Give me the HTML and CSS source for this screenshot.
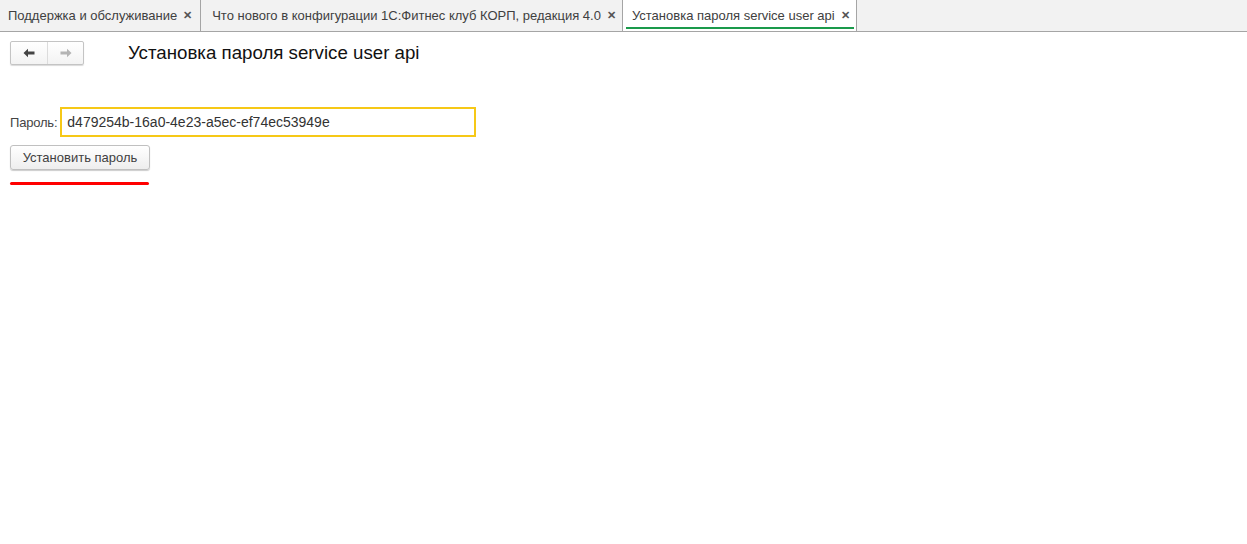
FILE: index.html
```html
<!DOCTYPE html>
<html lang="ru">
<head>
<meta charset="utf-8">
<title>Установка пароля service user api</title>
<link rel="stylesheet" href="styles.css">
</head>
<body>
<div class="tabbar">
  <div class="tab tab-first"><span class="tab-text">Поддержка и обслуживание</span><span class="tab-close">✕</span></div>
  <div class="tab tab-second"><span class="tab-text">Что нового в конфигурации 1С:Фитнес клуб КОРП, редакция 4.0</span><span class="tab-close">✕</span></div>
  <div class="tab tab-active"><span class="tab-text">Установка пароля service user api</span><span class="tab-close">✕</span></div>
</div>
<div class="content">
  <div class="header">
    <div class="nav">
      <div class="nav-btn nav-back"><svg width="12" height="10" viewBox="0 0 12 10"><path d="M0.5 5 L5 0.8 L5 3.6 L11.5 3.6 L11.5 6.4 L5 6.4 L5 9.2 Z" fill="#444"/></svg></div>
      <div class="nav-btn nav-fwd"><svg width="12" height="10" viewBox="0 0 12 10"><path d="M11.5 5 L7 0.8 L7 3.6 L0.5 3.6 L0.5 6.4 L7 6.4 L7 9.2 Z" fill="#b4b4b4"/></svg></div>
    </div>
    <h1 class="title">Установка пароля service user api</h1>
  </div>
  <div class="field">
    <span class="label">Пароль:</span>
    <div class="input">d479254b-16a0-4e23-a5ec-ef74ec53949e</div>
  </div>
  <div class="btn">Установить пароль</div>
  <div class="redline"></div>
</div>
</body>
</html>
```
FILE: styles.css
```css
html, body {
  margin: 0;
  padding: 0;
  background: #ffffff;
  font-family: "Liberation Sans", Arial, sans-serif;
  color: #333333;
}
.tabbar {
  display: flex;
  height: 31px;
  background: #f2f2f2;
  border-bottom: 1px solid #a5a5a5;
}
.tab {
  display: flex;
  align-items: center;
  padding: 0 8px 0 11px;
  border-right: 1px solid #a5a5a5;
  font-size: 13px;
  color: #404040;
  position: relative;
}
.tab-first {
  padding-left: 8px;
}
.tab-second {
  padding-right: 6px;
}
.tab-text {
  white-space: nowrap;
}
.tab-close {
  margin-left: 6px;
  font-size: 11px;
  font-weight: bold;
  color: #555555;
}
.tab-active {
  background: #ffffff;
  padding-left: 9px;
  padding-right: 6px;
}
.tab-active::after {
  content: "";
  position: absolute;
  left: 3px;
  right: 2px;
  top: 27px;
  height: 2px;
  background: #1a9a4b;
}
.content {
  padding: 9px 10px 0 10px;
}
.header {
  display: flex;
  align-items: flex-start;
}
.nav {
  display: flex;
  height: 22px;
  border: 1px solid #c4c4c4;
  border-radius: 2px;
  background: linear-gradient(#ffffff, #f3f3f3);
  box-shadow: 0 1px 1px rgba(0,0,0,0.15);
}
.nav-btn {
  display: flex;
  align-items: center;
  justify-content: center;
}
.nav-back {
  width: 36px;
}
.nav-fwd {
  width: 35px;
  border-left: 1px solid #dcdcdc;
}
.title {
  margin: 0 0 0 44px;
  font-size: 18.7px;
  font-weight: normal;
  color: #111111;
  line-height: 24px;
}
.field {
  display: flex;
  align-items: center;
  margin-top: 42px;
}
.label {
  font-size: 13px;
  color: #444444;
  margin-right: 3px;
  letter-spacing: -0.2px;
}
.input {
  width: 407px;
  height: 26px;
  border: 2px solid #f6c817;
  font-size: 14px;
  color: #333333;
  line-height: 26px;
  padding-left: 5px;
}
.btn {
  margin-top: 8px;
  width: 138px;
  height: 23px;
  border: 1px solid #c0c0c0;
  border-radius: 3px;
  background: linear-gradient(#ffffff, #eeeeee);
  box-shadow: 0 1px 1px rgba(0,0,0,0.2);
  font-size: 13px;
  color: #404040;
  display: flex;
  align-items: center;
  justify-content: center;
}
.redline {
  margin-top: 12px;
  width: 139px;
  height: 3px;
  border-radius: 2px;
  background: #ff0000;
}
```
